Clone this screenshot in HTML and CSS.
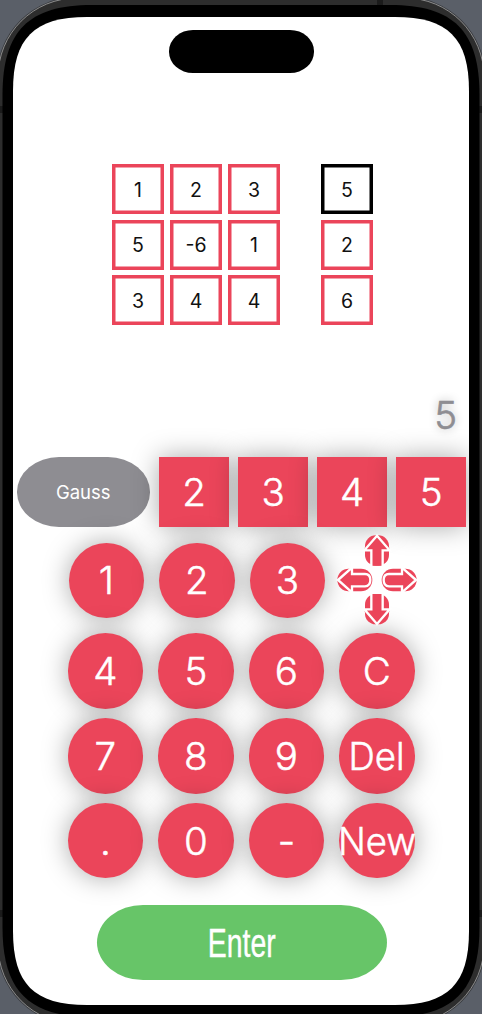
FILE: index.html
```html
<!DOCTYPE html>
<html lang="en">
<head>
<meta charset="utf-8">
<title>Matrix calculator</title>
<link rel="stylesheet" href="styles.css">
</head>
<body>
<svg class="phone" viewBox="0 0 482 1014" aria-hidden="true">
  <rect width="482" height="1014" fill="#5a5f68"/>
  <rect x="-2" y="-2" width="486" height="1026" rx="79" fill="#2d2d2d" stroke="#3a3c40" stroke-width="2.500"/>
  <rect x="-2" y="-2" width="486" height="1026" rx="79" fill="#2d2d2d" stroke="#8b8b8b" stroke-width="1"/>
  <path d="M377 0h6v5h-6zM0 106h3v7h-3zM479 106h3v7h-3zM0 910h3v7h-3zM479 910h3v7h-3z" fill="#1b1b1b"/>
  <path d="M2.500 95C2.500 31 28.500 5 92 5H390C453.500 5 479.500 31 479.500 95V927C479.500 991 453.500 1017 390 1017H92C28.500 1017 2.500 991 2.500 927Z" fill="#000"/>
  <path d="M13 91C13 38 34 17 87 17H395C448 17 469 38 469 91V931C469 984 448 1005 395 1005H87C34 1005 13 984 13 931Z" fill="#fff"/>
</svg>
<main class="screen">
  <div class="island"></div>
  <section class="matrix">
    <div class="cell">1</div><div class="cell">2</div><div class="cell">3</div><div class="cell result active">5</div>
    <div class="cell">5</div><div class="cell">-6</div><div class="cell">1</div><div class="cell result">2</div>
    <div class="cell">3</div><div class="cell">4</div><div class="cell">4</div><div class="cell result">6</div>
  </section>
  <div class="display">5</div>
  <div class="modes">
    <button class="gauss">Gauss</button>
    <button class="size">2</button><button class="size">3</button><button class="size">4</button><button class="size">5</button>
  </div>
  <div class="row first">
    <button class="key">1</button><button class="key">2</button><button class="key">3</button>
    <svg class="arrows" viewBox="0 0 288 312" aria-label="Move">
      <defs>
        <g id="up">
          <rect x="105" y="22" width="72" height="91" rx="32" fill="#eb455a"/>
          <path d="M124 113V68H104V59L141 22L178 59V68H158V113" fill="#eb455a"/>
          <path d="M124 114V67H103L141 23L179 67H158V114" fill="none" stroke="#fff" stroke-width="7"/>
        </g>
        <g id="left">
          <rect x="22" y="122" width="105" height="68" rx="34" fill="#eb455a"/>
          <path d="M24 156L66 119V138H105Q121 138 121 156T105 175H66V193Z" fill="#eb455a" stroke="#fff" stroke-width="7"/>
        </g>
      </defs>
      <use href="#up"/>
      <use href="#up" transform="matrix(1 0 0 -1 0 311)"/>
      <use href="#left"/>
      <use href="#left" transform="matrix(-1 0 0 1 282 0)"/>
    </svg>
  </div>
  <div class="keys">
    <button class="key">4</button><button class="key">5</button><button class="key">6</button><button class="key">C</button>
    <button class="key">7</button><button class="key">8</button><button class="key">9</button><button class="key"><span class="wide">Del</span></button>
    <button class="key">.</button><button class="key">0</button><button class="key">-</button><button class="key"><span class="wide">New</span></button>
  </div>
  <button class="enter"><span>Enter</span></button>
</main>
</body>
</html>
```
FILE: styles.css
```css
* { box-sizing: border-box; }
body { margin: 0; width: 482px; height: 1014px; overflow: hidden; font-family: Inter, "Liberation Sans", sans-serif; }
button { display: flex; align-items: center; justify-content: center; flex: none; border: 0; padding: 0; margin: 0; font: inherit; color: #fff; }
.phone { position: absolute; inset: 0; width: 482px; height: 1014px; }
.screen { position: relative; margin: 0 13px; padding-top: 30px; height: 1005px; overflow: hidden; display: flex; flex-direction: column; }
.island { flex: none; width: 145px; height: 42.5px; margin-left: 155.5px; border-radius: 24px / 21.25px; background: #000; }
.matrix { flex: none; display: grid; grid-template-columns: 52px 52px 52px 87px; grid-auto-rows: 50px; gap: 5.7px 6px; margin: 91.5px 0 0 99px; color: #111; }
.cell { width: 52px; padding-top: 1px; box-shadow: inset 0 0 0 3.5px #eb455a; display: flex; align-items: center; justify-content: center; font-size: 19.5px; font-weight: 400; }
.result { justify-self: end; }
.active { box-shadow: inset 0 0 0 3.5px #000; }
.display { flex: none; height: 48px; line-height: 48px; margin-top: 66px; padding-right: 12px; text-align: right; font-size: 38.5px; font-weight: 300; -webkit-text-stroke: .6px; color: #8e8d92; text-shadow: 0 0 10px rgba(0,0,0,.33); }
.modes { flex: none; display: flex; gap: 9.4px; padding-left: 3.5px; margin-top: 18px; }
.gauss { width: 133.5px; height: 69.5px; border-radius: 42px / 34.75px; background: #8e8d92; font-size: 18.5px; font-weight: 400; }
.size { width: 69.6px; height: 69.5px; background: #eb455a; font-size: 38.5px; font-weight: 300; -webkit-text-stroke: .5px; box-shadow: 0 0 27px rgba(0,0,0,.34); }
.row { flex: none; display: flex; align-items: center; height: 75.5px; }
.first { margin: 15.7px 0 0 55.7px; }
.first .key + .key { margin-left: 15px; }
.key { width: 75.5px; height: 75.5px; border-radius: 50%; background: #eb455a; font-size: 38.5px; font-weight: 300; -webkit-text-stroke: .5px; box-shadow: 0 0 27px rgba(0,0,0,.34); }
.arrows { position: relative; flex: none; width: 96px; height: 104px; margin-left: 5px; }
.keys { flex: none; display: grid; grid-template-columns: repeat(4, 75.5px); gap: 9.3px 15px; margin: 15.3px 0 0 54.6px; }
.key span { white-space: nowrap; }
.wide { transform: scaleX(.95); }
.enter { width: 290px; height: 75px; margin: 27px 0 0 84px; padding-top: 2px; border-radius: 46px / 37.5px; background: #67c568; font-family: "Liberation Sans", sans-serif; font-size: 40px; }
.enter span { transform: scaleX(.71); -webkit-text-stroke: .4px; }
```
